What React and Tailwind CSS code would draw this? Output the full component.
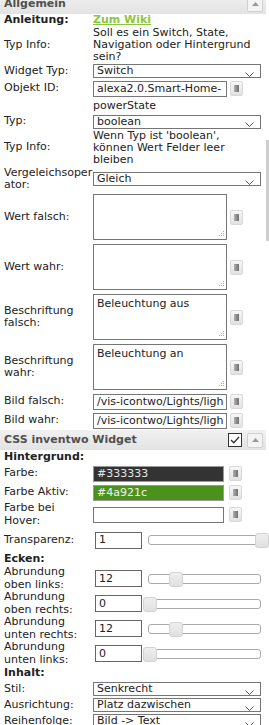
import React from "react"

function SideBtn() {
  return (
    <div className="ml-[3px] flex h-[15px] w-[13px] shrink-0 items-center justify-center rounded-[2px] border border-[#d9d9d9] bg-gradient-to-b from-[#f7f7f7] to-[#e2e2e2]">
      <div className="h-[7px] w-[5px] bg-gradient-to-r from-[#b0b0b0] to-[#707070]"></div>
    </div>
  )
}

function Chevron() {
  return (
    <svg width="9" height="5" viewBox="0 0 9 5" className="mt-[6px] shrink-0">
      <path d="M0.5 0.5 L4.5 4.5 L8.5 0.5" stroke="#555" strokeWidth="1" fill="none" />
    </svg>
  )
}

function Select({ value }) {
  return (
    <div className="flex h-[14px] w-[168px] items-center justify-between border border-[#767676] bg-white pl-[3px] pr-[6px]">
      <span className="leading-[12px] whitespace-nowrap">{value}</span>
      <Chevron />
    </div>
  )
}

function TextInput({ value, className = "" }) {
  return (
    <div className="flex items-center">
      <div className={`flex h-[16px] w-[134px] items-center overflow-hidden whitespace-nowrap border border-[#767676] px-[3px] leading-[12px] ${className}`}>
        {value}
      </div>
      <SideBtn />
    </div>
  )
}

function Grip() {
  return (
    <svg width="6" height="6" viewBox="0 0 6 6" className="absolute bottom-[2px] right-[2px]">
      <rect x="5" y="0" width="1" height="1" fill="#aaa" />
      <rect x="3" y="2" width="1" height="1" fill="#aaa" />
      <rect x="5" y="2" width="1" height="1" fill="#aaa" />
      <rect x="1" y="4" width="1" height="1" fill="#aaa" />
      <rect x="3" y="4" width="1" height="1" fill="#aaa" />
      <rect x="5" y="4" width="1" height="1" fill="#aaa" />
    </svg>
  )
}

function TextArea({ value }) {
  return (
    <div className="flex items-center">
      <div className="relative h-[46px] w-[134px] border border-[#767676] px-[3px] pt-[2px] leading-[13px]">
        {value}
        <Grip />
      </div>
      <SideBtn />
    </div>
  )
}

function Slider({ handle, track = "w-[113px]" }) {
  return (
    <div className={`relative ml-[6px] h-[10px] ${track} rounded-[3px] border border-[#aaaaaa] bg-white`}>
      <div className={`absolute top-[-3px] h-[15px] w-[14px] rounded-[3px] border border-[#d3d3d3] bg-gradient-to-b from-[#eeeeee] to-[#e0e0e0] ${handle}`}></div>
    </div>
  )
}

function NumRow({ label, value, handle }) {
  return (
    <Row label={label} className="h-[25px]">
      <div className="flex items-center">
        <div className="ml-[2px] flex h-[17px] w-[47px] items-center border border-[#666] pl-[3px] leading-[12px]">{value}</div>
        <Slider handle={handle} />
      </div>
    </Row>
  )
}

function Row({ label, className = "", bold = false, children }) {
  return (
    <div className={`flex items-center ${className}`}>
      <div className={`w-[93px] shrink-0 pl-[4px] leading-[12.5px] ${bold ? "font-bold" : ""}`}>{label}</div>
      <div className="min-w-0 flex-1">{children}</div>
    </div>
  )
}

function SectionHeader({ title, check = false, className = "" }) {
  return (
    <div className={`flex h-[20px] items-center justify-between bg-gradient-to-b from-[#f1f1f1] to-[#e3e3e3] pl-[4px] pr-[3px] ${className}`}>
      <span className="font-bold text-[#505050]">{title}</span>
      <div className="flex items-center gap-[5px]">
        {check && (
          <div className="flex h-[14px] w-[14px] items-center justify-center border border-[#333] bg-white">
            <svg width="10" height="8" viewBox="0 0 10 8">
              <path d="M1 4 L3.8 6.8 L9 1" stroke="#333" strokeWidth="1.3" fill="none" />
            </svg>
          </div>
        )}
        <div className="flex h-[15px] w-[16px] items-center justify-center rounded-[2px] border border-[#d0d0d0] bg-[#f4f4f4]">
          <svg width="7" height="4" viewBox="0 0 7 4">
            <path d="M0 4 L3.5 0 L7 4 Z" fill="#999" />
          </svg>
        </div>
      </div>
    </div>
  )
}

export default function App() {
  return (
    <div className="relative h-[725px] w-[269px] overflow-hidden bg-white font-['DejaVu_Sans',Verdana,sans-serif] text-[11px] text-[#222]">
      <div className="w-[266px]">
        <SectionHeader title="Allgemein" className="-mt-[6px]" />

        <Row label="Anleitung:" bold className="h-[13px]">
          <span className="font-bold text-[#8cc63e] underline">Zum Wiki</span>
        </Row>
        <Row label="Typ Info:" className="h-[36px]">
          <div className="leading-[12px]">
            Soll es ein Switch, State,<br />Navigation oder Hintergrund<br />sein?
          </div>
        </Row>
        <Row label="Widget Typ:" className="h-[16px]">
          <Select value="Switch" />
        </Row>
        <Row label="Objekt ID:" className="h-[19px]">
          <TextInput value="alexa2.0.Smart-Home-" />
        </Row>
        <Row label="" className="h-[16px]">
          <span>powerState</span>
        </Row>
        <Row label="Typ:" className="h-[15px]">
          <Select value="boolean" />
        </Row>
        <Row label="Typ Info:" className="h-[37px]">
          <div className="leading-[12px]">
            Wenn Typ ist 'boolean',<br />können Wert Felder leer<br />bleiben
          </div>
        </Row>
        <Row label={<>Vergeleichsoper<br />ator:</>} className="h-[26px]">
          <Select value="Gleich" />
        </Row>
        <Row label="Wert falsch:" className="h-[50px]">
          <TextArea value="" />
        </Row>
        <Row label="Wert wahr:" className="h-[50px]">
          <TextArea value="" />
        </Row>
        <Row label={<>Beschriftung<br />falsch:</>} className="h-[50px]">
          <TextArea value="Beleuchtung aus" />
        </Row>
        <Row label={<>Beschriftung<br />wahr:</>} className="h-[50px]">
          <TextArea value="Beleuchtung an" />
        </Row>
        <Row label="Bild falsch:" className="h-[19px]">
          <TextInput value="/vis-icontwo/Lights/ligh" />
        </Row>
        <Row label="Bild wahr:" className="h-[19px]">
          <TextInput value="/vis-icontwo/Lights/ligh" />
        </Row>

        <SectionHeader title="CSS inventwo Widget" check />

        <Row label="Hintergrund:" bold className="h-[14px]" />
        <Row label="Farbe:" className="h-[19px]">
          <div className="flex items-center">
            <div className="flex h-[16px] w-[131px] items-center border border-[#999] bg-[#333333] px-[3px] leading-[12px] text-[#e6e6e6]">#333333</div>
            <div className="ml-[2px]"><SideBtn /></div>
          </div>
        </Row>
        <Row label="Farbe Aktiv:" className="h-[19px]">
          <div className="flex items-center">
            <div className="flex h-[16px] w-[131px] items-center border border-[#999] bg-[#4a921c] px-[3px] leading-[12px] text-[#f2f2f2]">#4a921c</div>
            <div className="ml-[2px]"><SideBtn /></div>
          </div>
        </Row>
        <Row label={<>Farbe bei<br />Hover:</>} className="h-[25px]">
          <div className="flex items-center">
            <div className="h-[16px] w-[131px] border border-[#767676] bg-white"></div>
            <div className="ml-[2px]"><SideBtn /></div>
          </div>
        </Row>
        <Row label="Transparenz:" className="h-[26px]">
          <div className="flex items-center">
            <div className="ml-[2px] flex h-[17px] w-[47px] items-center border border-[#666] pl-[3px] leading-[12px]">1</div>
            <Slider handle="left-[106px]" track="w-[117px]" />
          </div>
        </Row>

        <Row label="Ecken:" bold className="h-[13px]" />
        <NumRow label={<>Abrundung<br />oben links:</>} value="12" handle="left-[20px]" />
        <NumRow label={<>Abrundung<br />oben rechts:</>} value="0" handle="left-[-6px]" />
        <NumRow label={<>Abrundung<br />unten rechts:</>} value="12" handle="left-[20px]" />
        <NumRow label={<>Abrundung<br />unten links:</>} value="0" handle="left-[-6px]" />

        <Row label="Inhalt:" bold className="h-[15px]" />
        <Row label="Stil:" className="h-[16px]">
          <Select value="Senkrecht" />
        </Row>
        <Row label="Ausrichtung:" className="h-[16px]">
          <Select value="Platz dazwischen" />
        </Row>
        <Row label="Reihenfolge:" className="h-[16px]">
          <Select value="Bild -> Text" />
        </Row>
      </div>

      {/* scrollbar thumb of the outer panel */}
      <div className="absolute right-0 top-[140px] h-[101px] w-[3px] bg-[#cfcfcf]"></div>
    </div>
  )
}
